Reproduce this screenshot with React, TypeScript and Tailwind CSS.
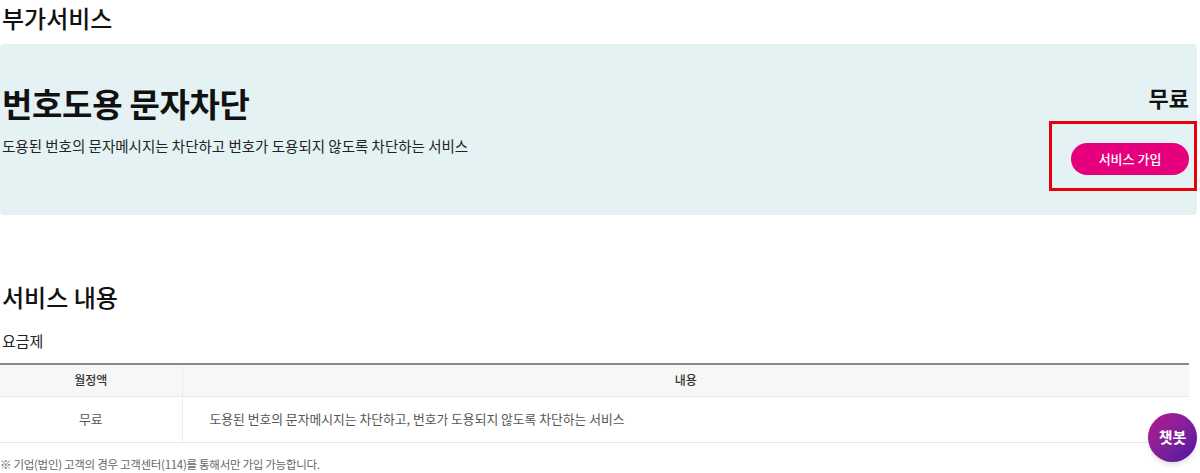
import React from 'react';

const font = { fontFamily: '"Noto Sans CJK KR", "Noto Sans", sans-serif' };

export default function App() {
  return (
    <div className="relative min-h-[473px] w-[1200px] bg-white text-[#111]" style={font}>
      <div className="w-[1197px]">
        <h2 className="pl-[2px] text-[24px] font-medium leading-[36px]">부가서비스</h2>

        {/* 상품 카드 */}
        <div className="mt-2 flex h-[171px] justify-between rounded-[4px] bg-[#e4f2f3] pr-2">
          <div className="pl-[2px] pt-[39px]">
            <h1 className="text-[33px] font-bold leading-[40px] tracking-[-0.3px]">번호도용 문자차단</h1>
            <p className="mt-3 text-[14.5px] leading-[22px] text-[#222]">
              도용된 번호의 문자메시지는 차단하고 번호가 도용되지 않도록 차단하는 서비스
            </p>
          </div>
          <div className="flex flex-col items-end pt-[38px]">
            <span className="text-[22px] font-bold leading-[30px]">무료</span>
            <div className="-mr-2 mt-[9px] border-[3px] border-[#e8000b] pb-[13px] pl-[19px] pr-[5px] pt-[19px]">
              <button className="h-[32px] w-[118px] rounded-full bg-[#e6007e] text-[13px] font-medium text-white">
                서비스 가입
              </button>
            </div>
          </div>
        </div>

        <div className="mr-2">
          <h2 className="mt-16 pl-[2px] text-[24px] font-medium leading-[36px]">서비스 내용</h2>
          <h3 className="mt-[15px] pl-[2px] text-[15px] leading-[22px] text-[#222]">요금제</h3>

          <table className="mt-[11px] w-full border-collapse border-t-2 border-[#888]">
            <thead>
              <tr className="h-[32px] bg-[#f7f7f7] text-[12px] text-[#333]">
                <th className="w-[182px] border-r border-[#ececec] font-medium">월정액</th>
                <th className="font-medium">내용</th>
              </tr>
            </thead>
            <tbody>
              <tr className="h-[46px] border-y border-[#e8e8e8] text-[12.8px] text-[#555]">
                <td className="border-r border-[#ececec] text-center">무료</td>
                <td className="pl-[27px]">도용된 번호의 문자메시지는 차단하고, 번호가 도용되지 않도록 차단하는 서비스</td>
              </tr>
            </tbody>
          </table>

          <p className="mt-3 text-[11.5px] leading-[18px] tracking-[-0.3px] text-[#666]">
            ※ 기업(법인) 고객의 경우 고객센터(114)를 통해서만 가입 가능합니다.
          </p>
        </div>
      </div>

      {/* 챗봇 */}
      <button className="absolute bottom-[11px] right-[3px] flex h-[49px] w-[49px] items-center justify-center rounded-full bg-gradient-to-br from-[#b80a8c] to-[#4f10a3] text-[15px] font-bold text-white shadow-md">
        챗봇
      </button>
    </div>
  );
}
